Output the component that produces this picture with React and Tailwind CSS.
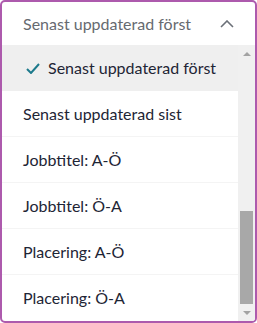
import React from "react";

const items = [
  "Senast uppdaterad sist",
  "Jobbtitel: A-Ö",
  "Jobbtitel: Ö-A",
  "Placering: A-Ö",
  "Placering: Ö-A",
];

export default function App() {
  return (
    <div
      className="w-[257px] h-[323px] border-2 border-[#ad5aad] rounded-[5px] bg-white flex flex-col overflow-hidden"
      style={{ fontFamily: "Lato, 'Open Sans', sans-serif" }}
    >
      <div className="h-[43px] shrink-0 flex items-center justify-between pl-[21px] pr-[21px]">
        <span className="text-[16px] text-[#666a70]">Senast uppdaterad först</span>
        <svg width="14" height="8" viewBox="0 0 14 8" fill="none">
          <path d="M1 7L7 1L13 7" stroke="#6b7078" strokeWidth="1.6" />
        </svg>
      </div>
      <div className="flex flex-1 min-h-0">
        <div className="flex-1 flex flex-col">
          <div className="h-[46px] shrink-0 bg-[#efefef] flex items-center pl-[24px] gap-[8px]">
            <svg width="14" height="11" viewBox="0 0 14 11" fill="none">
              <path d="M1 6L5 10L13 1" stroke="#1d7a8c" strokeWidth="2" />
            </svg>
            <span className="text-[16px] text-[#1e2535]">Senast uppdaterad först</span>
          </div>
          {items.map((t, i) => (
            <div
              key={t}
              className={`h-[46px] shrink-0 flex items-center pl-[21px] ${i < items.length - 1 ? "border-b border-[#f4f4f4]" : ""}`}
            >
              <span className="text-[16px] text-[#1e2535]">{t}</span>
            </div>
          ))}
        </div>
        <div className="w-[17px] shrink-0 bg-[#f0f0f0] flex flex-col items-center">
          <div className="h-[17px] flex items-center justify-center">
            <div className="w-0 h-0 border-l-[4px] border-r-[4px] border-b-[4px] border-l-transparent border-r-transparent border-b-[#a3a3a3]" />
          </div>
          <div className="flex-1 w-[13px] flex flex-col">
            <div className="h-[149px]" />
            <div className="h-[93px] bg-[#a8a8a8]" />
          </div>
          <div className="h-[17px] flex items-center justify-center">
            <div className="w-0 h-0 border-l-[4px] border-r-[4px] border-t-[4px] border-l-transparent border-r-transparent border-t-[#a3a3a3]" />
          </div>
        </div>
      </div>
    </div>
  );
}
